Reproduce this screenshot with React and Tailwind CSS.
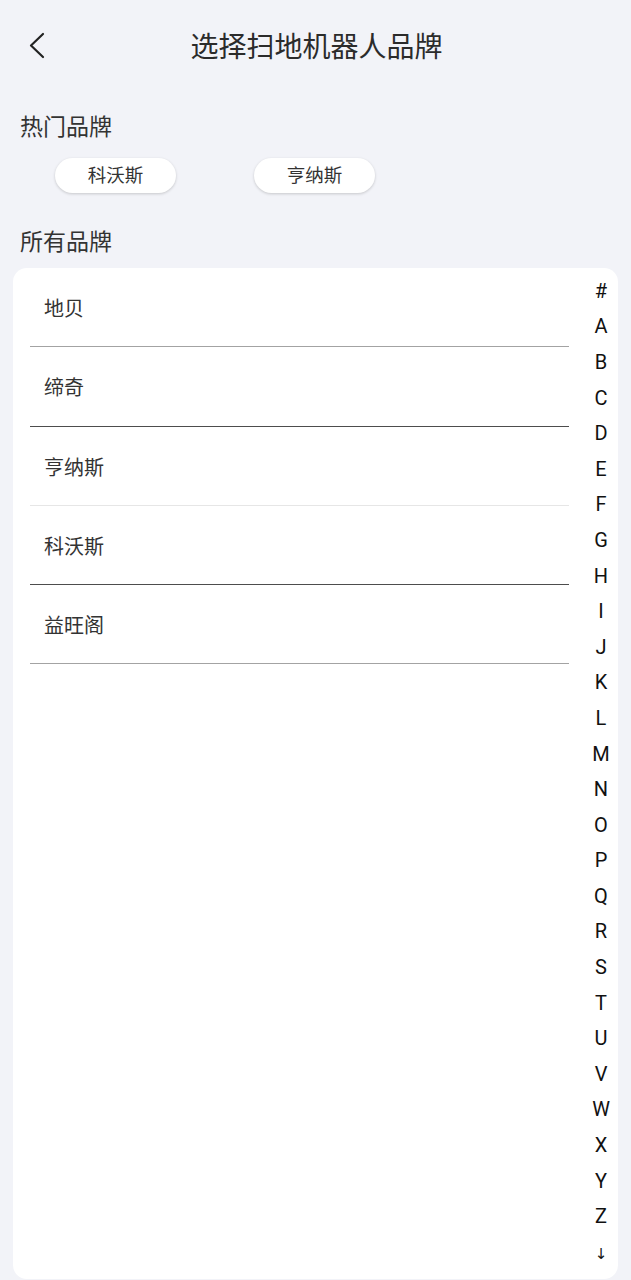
import React from "react";

const hot = ["科沃斯", "亨纳斯"];
const brands = [
  { name: "地贝", line: "border-[#a3a3a3]" },
  { name: "缔奇", line: "border-[#4d4d4d]" },
  { name: "亨纳斯", line: "border-[#e6e6e6]" },
  { name: "科沃斯", line: "border-[#4d4d4d]" },
  { name: "益旺阁", line: "border-[#a3a3a3]" },
];
const letters = ["#", ..."ABCDEFGHIJKLMNOPQRSTUVWXYZ".split("")];

export default function App() {
  return (
    <div
      className="w-[631px] h-[1280px] overflow-hidden bg-[#f2f3f8] text-[#333333] flex flex-col"
      style={{ fontFamily: 'Roboto, "Noto Sans CJK SC", sans-serif' }}
    >
      <div className="relative h-[94px] flex items-center justify-center shrink-0 pt-[2px]">
        <svg
          className="absolute left-[26px] top-[31px]"
          width="22"
          height="30"
          viewBox="0 0 22 30"
          fill="none"
        >
          <path d="M17 3 L5 14.5 L17 26" stroke="#222" strokeWidth="2.2" strokeLinecap="round" strokeLinejoin="round" />
        </svg>
        <div className="text-[28px] leading-[34px] text-[#2b2b2b] ml-[2px]">选择扫地机器人品牌</div>
      </div>
      <div className="mt-[19px] px-[20px] text-[23px] leading-[30px] text-[#333]">热门品牌</div>
      <div className="flex gap-[78px] pl-[55px] mt-[15px]">
        {hot.map((h) => (
          <div
            key={h}
            className="w-[121px] h-[35px] rounded-full bg-white flex items-center justify-center text-[18.5px] text-[#333] pt-[2px] shadow-[0_1px_3px_rgba(0,0,0,0.18)]"
          >
            {h}
          </div>
        ))}
      </div>
      <div className="mt-[35px] px-[20px] text-[23px] leading-[30px] text-[#333]">所有品牌</div>
      <div className="mt-[10px] mx-[13px] mb-[1px] flex-1 bg-white rounded-[14px] flex">
        <div className="flex-1 pl-[17px] pr-[15px]">
          {brands.map((b) => (
            <div
              key={b.name}
              className={`h-[79.25px] border-b ${b.line} flex items-center pl-[14px] text-[20px] text-[#333] pt-[4px]`}
            >
              {b.name}
            </div>
          ))}
        </div>
        <div className="w-[34px] pt-[5px] flex flex-col items-center">
          {letters.map((l) => (
            <div
              key={l}
              className="h-[35.6px] flex items-center justify-center text-[20px] text-[#111]"
            >
              {l}
            </div>
          ))}
          <div
            className="h-[35.6px] flex items-center justify-center text-[15px] text-[#111] pt-[4px]"
            style={{ fontFamily: '"DejaVu Sans", sans-serif' }}
          >
            ↓
          </div>
        </div>
      </div>
    </div>
  );
}
